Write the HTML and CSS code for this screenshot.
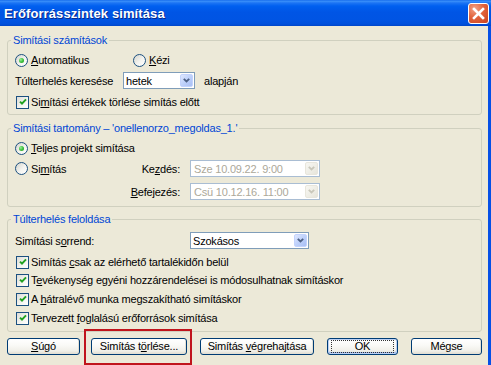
FILE: index.html
```html
<!DOCTYPE html>
<html lang="hu">
<head>
<meta charset="utf-8">
<title>Erőforrásszintek simítása</title>
<link rel="stylesheet" href="styles.css">
</head>
<body>
<div class="window">
  <div class="titlebar">
    <span class="title">Erőforrásszintek simítása</span>
    <span class="close"><svg width="19" height="19" viewBox="0 0 19 19"><path d="M5 5 L14 14 M14 5 L5 14" stroke="#fff" stroke-width="2.6" stroke-linecap="square"/></svg></span>
  </div>
  <div class="client">
    <fieldset class="group g1">
      <legend>Simítási számítások</legend>
      <div class="row h16">
        <div class="opt w118"><span class="radio on"></span><span class="lbl"><u>A</u>utomatikus</span></div>
        <div class="opt"><span class="radio"></span><span class="lbl"><u>K</u>ézi</span></div>
      </div>
      <div class="row h17 mt4">
        <span class="fieldlbl w108">Túlterhelés keresése</span>
        <div class="combo w72"><span class="val">hetek</span><span class="arrow"><svg width="7" height="5" viewBox="0 0 7 5"><path d="M0.8 0.8 L3.5 3.5 L6.2 0.8" fill="none" stroke="#4D6185" stroke-width="1.8"/></svg></span></div>
        <span class="after">alapján</span>
      </div>
      <div class="row h14 mt6">
        <span class="check"><svg width="8" height="8" viewBox="0 0 8 8"><path d="M1 3.6 L3 5.6 L7 1.4" fill="none" stroke="#21A121" stroke-width="2"/></svg></span><span class="lbl">Si<u>m</u>ítási értékek törlése simítás előtt</span>
      </div>
    </fieldset>

    <fieldset class="group g2">
      <legend>Simítási tartomány – 'onellenorzo_megoldas_1.'</legend>
      <div class="row h16">
        <div class="opt"><span class="radio on"></span><span class="lbl"><u>T</u>eljes projekt simítása</span></div>
      </div>
      <div class="row h17 mt4">
        <div class="opt w115"><span class="radio"></span><span class="lbl">Si<u>m</u>ítás</span></div>
        <span class="datelbl">Ke<u>z</u>dés:</span>
        <div class="combo w130 disabled"><span class="val">Sze 10.09.22. 9:00</span><span class="arrow"><svg width="7" height="5" viewBox="0 0 7 5"><path d="M0.8 0.8 L3.5 3.5 L6.2 0.8" fill="none" stroke="#C9C7BA" stroke-width="1.8"/></svg></span></div>
      </div>
      <div class="row h17 mt6">
        <span class="spacer w115"></span>
        <span class="datelbl"><u>B</u>efejezés:</span>
        <div class="combo w130 disabled"><span class="val">Csü 10.12.16. 11:00</span><span class="arrow"><svg width="7" height="5" viewBox="0 0 7 5"><path d="M0.8 0.8 L3.5 3.5 L6.2 0.8" fill="none" stroke="#C9C7BA" stroke-width="1.8"/></svg></span></div>
      </div>
    </fieldset>

    <fieldset class="group g3">
      <legend>Túlterhelés feloldása</legend>
      <div class="row h17">
        <span class="fieldlbl w175">Simítási s<u>o</u>rrend:</span>
        <div class="combo w119"><span class="val">Szokásos</span><span class="arrow"><svg width="7" height="5" viewBox="0 0 7 5"><path d="M0.8 0.8 L3.5 3.5 L6.2 0.8" fill="none" stroke="#4D6185" stroke-width="1.8"/></svg></span></div>
      </div>
      <div class="row h14 mt6">
        <span class="check"><svg width="8" height="8" viewBox="0 0 8 8"><path d="M1 3.6 L3 5.6 L7 1.4" fill="none" stroke="#21A121" stroke-width="2"/></svg></span><span class="lbl">Simítás <u>c</u>sak az elérhető tartalékidőn belül</span>
      </div>
      <div class="row h14 mt4">
        <span class="check"><svg width="8" height="8" viewBox="0 0 8 8"><path d="M1 3.6 L3 5.6 L7 1.4" fill="none" stroke="#21A121" stroke-width="2"/></svg></span><span class="lbl">T<u>e</u>vékenység egyéni hozzárendelései is módosulhatnak simításkor</span>
      </div>
      <div class="row h14 mt5">
        <span class="check"><svg width="8" height="8" viewBox="0 0 8 8"><path d="M1 3.6 L3 5.6 L7 1.4" fill="none" stroke="#21A121" stroke-width="2"/></svg></span><span class="lbl">A <u>h</u>átralévő munka megszakítható simításkor</span>
      </div>
      <div class="row h14 mt5">
        <span class="check"><svg width="8" height="8" viewBox="0 0 8 8"><path d="M1 3.6 L3 5.6 L7 1.4" fill="none" stroke="#21A121" stroke-width="2"/></svg></span><span class="lbl">Tervezett <u>f</u>oglalású erőforrások simítása</span>
      </div>
    </fieldset>

    <div class="buttons">
      <span class="btn w73"><span class="cap"><u>S</u>úgó</span></span>
      <span class="btn w96"><span class="cap">Simítás t<u>ö</u>rlése...</span><span class="highlight"></span></span>
      <span class="btn w114"><span class="cap">Simítás <u>v</u>égrehajtása</span></span>
      <span class="btn w71 default"><span class="focus">OK</span></span>
      <span class="btn w71"><span class="cap">Mégse</span></span>
    </div>
  </div>
</div>
</body>
</html>
```

FILE: styles.css
```css
html, body {
  margin: 0;
  padding: 0;
}
body {
  width: 491px;
  height: 365px;
  overflow: hidden;
  background: #ECE9D8;
  font-family: "Liberation Sans", Arial, sans-serif;
  font-size: 11px;
  letter-spacing: -0.2px;
  color: #000;
}
u {
  text-decoration: underline;
  text-underline-offset: 1px;
}
.window {
  display: flex;
  flex-direction: column;
  height: 365px;
}
.titlebar {
  flex: none;
  height: 26px;
  display: flex;
  justify-content: space-between;
  align-items: flex-start;
  padding: 0 2px 0 4px;
  background: linear-gradient(to bottom, #0A5FE8 0px, #3D93FA 1px, #1C74F4 3px, #0060F0 6px, #0055E5 12px, #0054E3 20px, #0050DC 24px, #0046C8 26px);
}
.title {
  font-size: 13px;
  font-weight: bold;
  letter-spacing: 0.1px;
  color: #fff;
  line-height: 27px;
  text-shadow: 1px 1px 0 #0A2A8A;
}
.close {
  margin-top: 3px;
  width: 21px;
  height: 21px;
  box-sizing: border-box;
  border: 1px solid #fff;
  border-radius: 3px;
  background: radial-gradient(circle at 30% 25%, #F2A286 0%, #E2643D 45%, #C9421F 100%);
  display: flex;
  align-items: center;
  justify-content: center;
}
.client {
  flex: 1;
  background: #ECE9D8;
  border-right: 3px solid #0650E6;
  padding: 7px 6px 0 7px;
}
.group {
  margin: 0;
  padding: 5px 6px 5px 7px;
  border: 1px solid #D0D0BF;
  border-radius: 3px;
  min-width: 0;
}
.group legend {
  padding: 0 2px;
  margin-left: -4px;
  color: #0046D5;
  line-height: 14px;
}
.g2 {
  margin-top: 6px;
  padding-bottom: 6px;
}
.g3 {
  margin-top: 5px;
  padding-top: 6px;
  padding-bottom: 6px;
}
.row {
  display: flex;
  align-items: center;
  white-space: nowrap;
}
.h14 { height: 14px; }
.h16 { height: 16px; }
.h17 { height: 17px; }
.mt4 { margin-top: 4px; }
.mt5 { margin-top: 5px; }
.mt6 { margin-top: 6px; }
.opt {
  display: flex;
  align-items: center;
  flex: none;
}
.w118 { width: 118px; }
.w115 { width: 115px; }
.spacer { flex: none; }
.w108 { width: 108px; }
.w175 { width: 175px; }
.fieldlbl { flex: none; }
.lbl {
  margin-left: 3px;
}
.check + .lbl {
  margin-left: 2px;
}
.radio {
  flex: none;
  width: 13px;
  height: 13px;
  box-sizing: border-box;
  border: 1px solid #1C5180;
  border-radius: 50%;
  background: linear-gradient(135deg, #D4D4CC 0%, #F4F4F0 55%, #FFFFFF 100%);
  display: flex;
  align-items: center;
  justify-content: center;
}
.radio.on::after {
  content: "";
  width: 5px;
  height: 5px;
  border-radius: 50%;
  background: radial-gradient(circle at 35% 35%, #9BF09B 0%, #3CC03C 50%, #1E961E 100%);
}
.check {
  flex: none;
  margin-left: 1px;
  width: 13px;
  height: 13px;
  box-sizing: border-box;
  border: 1px solid #1C5180;
  background: linear-gradient(135deg, #DCDCD7 0%, #F4F4F0 55%, #FFFFFF 100%);
  display: flex;
  align-items: center;
  justify-content: center;
}
.check svg {
  display: block;
}
.combo {
  flex: none;
  height: 17px;
  box-sizing: border-box;
  border: 1px solid #7F9DB9;
  background: #fff;
  display: flex;
  align-items: center;
}
.w72 { width: 72px; }
.w119 { width: 119px; }
.w130 { width: 130px; }
.combo .val {
  flex: 1;
  padding-left: 2px;
  overflow: hidden;
}
.combo .arrow {
  flex: none;
  width: 13px;
  height: 13px;
  margin-right: 1px;
  box-sizing: border-box;
  border: 1px solid #C3D3FD;
  border-radius: 2px;
  background: linear-gradient(135deg, #E0E8FE 0%, #C1D3FB 45%, #A8BFF4 100%);
  display: flex;
  align-items: center;
  justify-content: center;
}
.combo.disabled {
  border-color: #A9BDD3;
}
.combo.disabled .val {
  color: #ACA899;
  padding-left: 3px;
}
.combo.disabled .arrow {
  border-color: #E8E6DC;
  background: linear-gradient(135deg, #F8F7F2 0%, #EEEDE5 60%, #E6E4DA 100%);
}
.after {
  margin-left: 9px;
}
.datelbl {
  flex: none;
  width: 50px;
  text-align: right;
  margin-right: 10px;
}
.buttons {
  margin-top: 6px;
  display: flex;
  align-items: flex-start;
  gap: 13px;
}
.btn {
  flex: none;
  height: 17px;
  box-sizing: border-box;
  border: 1px solid #003C74;
  border-radius: 3px;
  background: linear-gradient(to bottom, #FFFFFF 0%, #FAFAF7 40%, #F0EFE8 80%, #DEDBD0 100%);
  box-shadow: inset -1px -1px 0 #E3E0D5;
  display: flex;
  align-items: center;
  justify-content: center;
  white-space: nowrap;
  position: relative;
}
.btn .cap {
  line-height: 13px;
}
.w73 { width: 73px; margin-right: -2px; }
.w96 { width: 96px; }
.w114 { width: 114px; }
.w71 { width: 71px; }
.btn.default {
  box-shadow: inset 0 0 0 1px #BCD1F5, inset 0 -1px 0 1px #9DB7EA;
}
.btn .focus {
  display: flex;
  align-items: center;
  justify-content: center;
  width: calc(100% - 6px);
  height: 13px;
  line-height: 11px;
  box-sizing: border-box;
  border: 1px dotted #333;
}
.highlight {
  position: absolute;
  left: -8px;
  right: -6px;
  top: -10px;
  bottom: -11px;
  border: 2px solid #C0141C;
  pointer-events: none;
}
```
